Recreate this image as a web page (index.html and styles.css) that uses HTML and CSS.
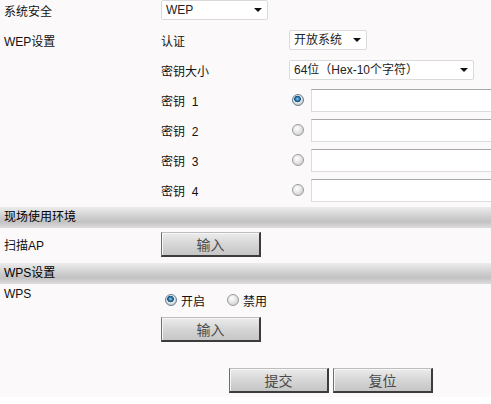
FILE: index.html
```html
<!DOCTYPE html>
<html lang="zh-CN">
<head>
  <meta charset="UTF-8" />
  <title>无线安全设置</title>
  <link rel="stylesheet" href="styles.css">
</head>
<body>

  <form class="page" id="wlanForm">
    <div class="row row-first">
      <div class="c1">系统安全</div>
      <div class="c2">
        <span class="sel sel-wep">
          <select><option>WEP</option></select>
        </span>
      </div>
    </div>

    <div class="row">
      <div class="c1">WEP设置</div>
      <div class="c2">认证</div>
      <div class="c3">
        <span class="sel sel-auth">
          <select><option>开放系统</option></select>
        </span>
      </div>
    </div>

    <div class="row">
      <div class="c1"></div>
      <div class="c2">密钥大小</div>
      <div class="c3">
        <span class="sel sel-size">
          <select><option>64位（Hex-10个字符）</option></select>
        </span>
      </div>
    </div>

    <div class="row">
      <div class="c1"></div>
      <div class="c2">密钥&nbsp; 1</div>
      <div class="c3">
        <input type="radio" class="radio" name="keyIndex" checked>
        <input type="text" class="key-input">
      </div>
    </div>

    <div class="row">
      <div class="c1"></div>
      <div class="c2">密钥&nbsp; 2</div>
      <div class="c3">
        <input type="radio" class="radio" name="keyIndex">
        <input type="text" class="key-input">
      </div>
    </div>

    <div class="row">
      <div class="c1"></div>
      <div class="c2">密钥&nbsp; 3</div>
      <div class="c3">
        <input type="radio" class="radio" name="keyIndex">
        <input type="text" class="key-input">
      </div>
    </div>

    <div class="row">
      <div class="c1"></div>
      <div class="c2">密钥&nbsp; 4</div>
      <div class="c3">
        <input type="radio" class="radio" name="keyIndex">
        <input type="text" class="key-input">
      </div>
    </div>

    <div class="bar">现场使用环境</div>

    <div class="row row-scan">
      <div class="c1">扫描AP</div>
      <div class="c2"><button type="button" class="btn">输入</button></div>
    </div>

    <div class="bar">WPS设置</div>

    <div class="row row-wps">
      <div class="c1">WPS</div>
      <div class="wps-opts">
        <div class="radio-line">
          <label class="opt"><input type="radio" class="radio" name="wps" checked>开启</label>
          <label class="opt"><input type="radio" class="radio" name="wps">禁用</label>
        </div>
        <button type="button" class="btn">输入</button>
      </div>
    </div>

    <div class="actions">
      <button type="submit" class="btn">提交</button>
      <button type="reset" class="btn">复位</button>
    </div>
  </form>

</body>
</html>
```

FILE: styles.css
```css
html, body {
  margin: 0;
  padding: 0;
  background: #ffffff;
  overflow: hidden;
}

body {
  font-family: 'Liberation Sans', 'Noto Sans CJK SC', sans-serif;
  font-size: 12px;
  color: #111;
}

.page {
  background: #fbf9f9;
  padding-bottom: 4px;
  overflow: hidden;
}

.row {
  display: flex;
  align-items: center;
  height: 30px;
}

.row-first {
  height: 20px;
  margin-bottom: 5px;
}

.c1 {
  width: 157px;
  padding-left: 4px;
  flex-shrink: 0;
}

.c2 {
  width: 128px;
  flex-shrink: 0;
}

.c3 {
  display: flex;
  align-items: center;
  flex-shrink: 0;
}

/* selects */
.sel {
  position: relative;
  display: inline-block;
}

.sel select {
  appearance: none;
  -webkit-appearance: none;
  height: 20px;
  border: 1px solid #dadada;
  border-radius: 2px;
  background: #fff;
  font-family: 'Liberation Sans', 'Noto Sans CJK SC', sans-serif;
  font-size: 12px;
  color: #222;
  padding: 0 0 0 4px;
  outline: none;
}

.sel::after {
  content: '';
  position: absolute;
  right: 6px;
  top: 8px;
  border-left: 4px solid transparent;
  border-right: 4px solid transparent;
  border-top: 4px solid #111;
  pointer-events: none;
}

.sel-wep {
  margin-top: -1px;
}

.sel-wep select {
  width: 107px;
}

.sel-auth select {
  width: 78px;
}

.sel-size select {
  width: 185px;
}

/* radios */
.radio {
  appearance: none;
  -webkit-appearance: none;
  width: 12px;
  height: 12px;
  margin: 0;
  flex-shrink: 0;
  border: 1px solid #9a9a9a;
  border-radius: 50%;
  background: radial-gradient(circle at 40% 35%, #ffffff 0, #e6e6e6 45%, #c4c4c4 100%);
  box-sizing: border-box;
}

.radio:checked {
  border-color: #6a7f90;
  background: radial-gradient(circle at 45% 40%, #a9d6f0 0, #3c86bb 1.5px, #0f4a78 3px, #e8eef2 3.6px, #c8c8c8 6px);
}

.c3 .radio {
  margin-left: 3px;
  margin-right: 7px;
}

.key-input {
  width: 200px;
  height: 23px;
  box-sizing: border-box;
  border: 1px solid #dcdcdc;
  border-top-color: #a8a8a8;
  background: #fff;
  padding: 0 3px;
}

/* section bars */
.bar {
  height: 21px;
  line-height: 21px;
  margin-top: 2px;
  padding-left: 4px;
  background: linear-gradient(to bottom, #ececec 0%, #d0d0d0 45%, #c2c2c2 70%, #dedede 100%);
  color: #000;
}

.row-scan {
  height: 33px;
}

/* buttons */
.btn {
  width: 100px;
  height: 25px;
  box-sizing: border-box;
  border: 1px solid #6e6e6e;
  border-top-color: #bdbdbd;
  border-right: 2px solid #3c3c3c;
  border-bottom: 2px solid #3c3c3c;
  background: linear-gradient(to bottom, #ececec 0%, #d6d6d6 50%, #c6c6c6 100%);
  box-shadow: inset 1px 1px 0 #f6f6f6;
  font-family: 'Liberation Sans', 'Noto Sans CJK SC', sans-serif;
  font-size: 14px;
  color: #4a4a4a;
  padding: 0;
  cursor: pointer;
}

/* wps */
.row-wps {
  height: auto;
  align-items: flex-start;
}

.row-wps .c1 {
  padding-top: 3px;
  line-height: 14px;
}

.wps-opts {
  flex: 1;
}

.radio-line {
  display: flex;
  align-items: center;
  height: 20px;
  margin-top: 6px;
  margin-bottom: 7px;
}

.opt {
  display: flex;
  align-items: center;
  gap: 4px;
  margin-left: 4px;
  margin-right: 18px;
  white-space: nowrap;
}

.actions {
  display: flex;
  gap: 4px;
  padding-left: 229px;
  margin-top: 26px;
}
```
